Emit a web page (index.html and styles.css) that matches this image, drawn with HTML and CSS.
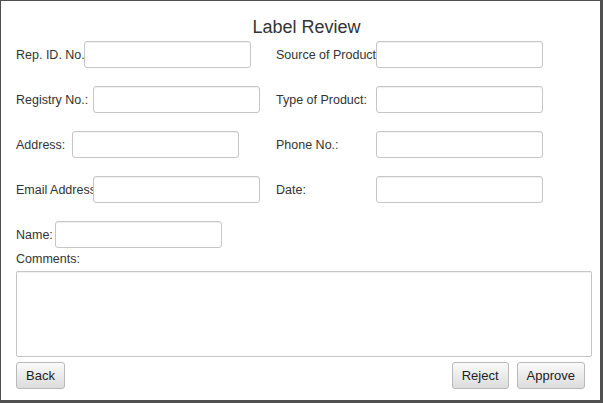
FILE: index.html
```html
<!DOCTYPE html>
<html>
<head>
<meta charset="utf-8">
<title>Label Review</title>
<link rel="stylesheet" href="styles.css">
</head>
<body>
<div class="window">
  <h1 class="title">Label Review</h1>
  <div class="form">
    <div class="row">
      <div class="cell left">
        <label class="lbl w-rep">Rep. ID. No.</label>
        <input class="field" type="text">
      </div>
      <div class="cell right">
        <label class="lbl w-right">Source of Product</label>
        <input class="field" type="text">
      </div>
    </div>
    <div class="row">
      <div class="cell left">
        <label class="lbl w-reg">Registry No.:</label>
        <input class="field" type="text">
      </div>
      <div class="cell right">
        <label class="lbl w-right">Type of Product:</label>
        <input class="field" type="text">
      </div>
    </div>
    <div class="row">
      <div class="cell left">
        <label class="lbl w-addr">Address:</label>
        <input class="field" type="text">
      </div>
      <div class="cell right">
        <label class="lbl w-right">Phone No.:</label>
        <input class="field" type="text">
      </div>
    </div>
    <div class="row">
      <div class="cell left">
        <label class="lbl w-email">Email Address</label>
        <input class="field" type="text">
      </div>
      <div class="cell right">
        <label class="lbl w-right">Date:</label>
        <input class="field" type="text">
      </div>
    </div>
    <div class="row row-last">
      <div class="cell left">
        <label class="lbl w-name">Name:</label>
        <input class="field" type="text">
      </div>
    </div>
    <div class="comments-label">Comments:</div>
    <textarea class="comments"></textarea>
    <div class="actions">
      <button class="btn">Back</button>
      <div class="spacer"></div>
      <button class="btn">Reject</button>
      <button class="btn">Approve</button>
    </div>
  </div>
</div>
</body>
</html>
```
FILE: styles.css
```css
html, body {
  margin: 0;
  padding: 0;
  background: #505050;
}
body {
  width: 603px;
  height: 403px;
  overflow: hidden;
  font-family: "Liberation Sans", Arial, sans-serif;
  color: #333;
}
.window {
  box-sizing: border-box;
  margin: 1px 0 0 1px;
  width: 599px;
  height: 399px;
  background: #fff;
  display: flex;
  flex-direction: column;
}
.title {
  margin: 0;
  height: 39px;
  box-sizing: border-box;
  padding: 15px 0 0 12px;
  font-size: 18px;
  line-height: 22px;
  font-weight: normal;
  text-align: center;
  color: #333;
}
.form {
  padding: 0 12px 0 15px;
  display: flex;
  flex-direction: column;
}
.row {
  display: flex;
  height: 27px;
  margin-top: 1px;
  margin-bottom: 17px;
}
.row-last {
  margin-bottom: 0;
}
.cell {
  display: flex;
  align-items: center;
}
.left {
  width: 260px;
}
.lbl {
  font-size: 12.5px;
  white-space: nowrap;
  overflow: hidden;
  flex: none;
  color: #333;
}
.w-rep { width: 68px; }
.w-reg { width: 77px; }
.w-addr { width: 56px; }
.w-email { width: 77px; }
.w-name { width: 39px; }
.w-right { width: 100px; }
.field {
  box-sizing: border-box;
  width: 167px;
  height: 27px;
  margin: 0;
  border: 1px solid #c6c6c6;
  border-radius: 3px;
  background: #fff;
  box-shadow: inset 0 1px 1px rgba(0,0,0,0.06);
  font-family: inherit;
}
.comments-label {
  height: 23px;
  line-height: 23px;
  font-size: 12.5px;
  color: #333;
}
.comments {
  box-sizing: border-box;
  display: block;
  width: 576px;
  height: 86px;
  margin: 0;
  border: 1px solid #c6c6c6;
  border-radius: 2px;
  box-shadow: inset 0 1px 1px rgba(0,0,0,0.06);
  resize: none;
}
.actions {
  display: flex;
  gap: 8px;
  margin-top: 5px;
  padding-right: 3px;
}
.spacer {
  flex: 1;
}
.btn {
  box-sizing: border-box;
  height: 27px;
  padding: 0 9px;
  margin: 0;
  border: 1px solid #b9b9b9;
  border-radius: 3px;
  background: linear-gradient(#fafafa, #dcdcdc);
  font-family: "Liberation Sans", Arial, sans-serif;
  font-size: 13px;
  color: #222;
}
```
